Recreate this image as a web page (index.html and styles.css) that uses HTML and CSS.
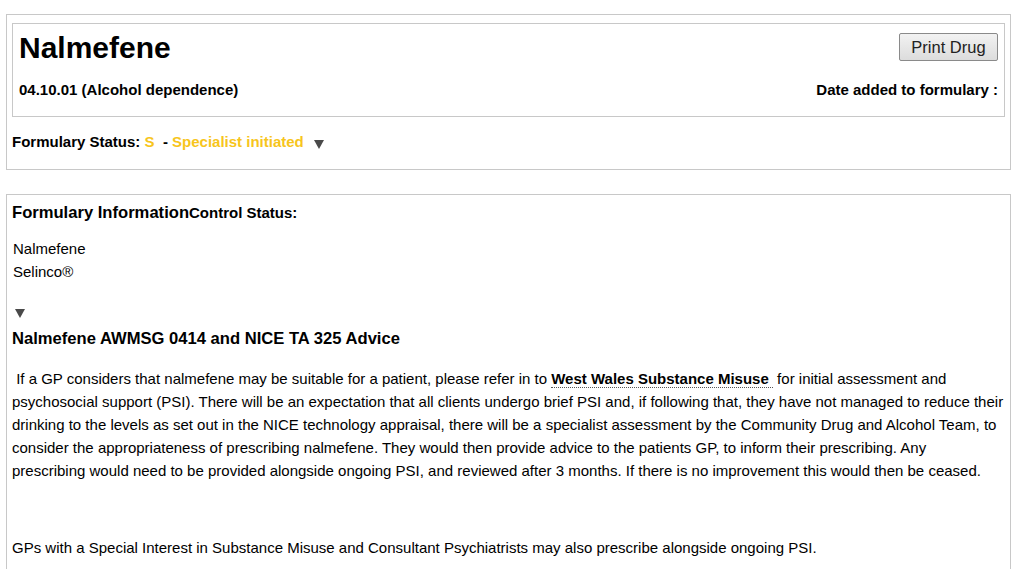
FILE: index.html
```
<!DOCTYPE html>
<html lang="en">
<head>
  <meta charset="UTF-8">
  <title>Nalmefene - Formulary</title>
  <link rel="stylesheet" href="styles.css">
</head>
<body>
  <!-- Drug header -->
  <div class="panel">
    <div class="drug-head">
      <div class="head-row">
        <h1>Nalmefene</h1>
        <button class="print-btn">Print Drug</button>
      </div>
      <div class="head-row sub">
        <span>04.10.01 (Alcohol dependence)</span>
        <span>Date added to formulary :</span>
      </div>
    </div>
    <div class="status">
      Formulary Status: <span class="gold">S</span>&nbsp; - <span class="gold">Specialist initiated</span>
      <span class="toggle"></span>
    </div>
  </div>

  <!-- Formulary information -->
  <div class="panel info">
    <h2>Formulary Information<span class="control">Control Status:</span></h2>
    <ul class="names">
      <li>Nalmefene</li>
      <li>Selinco®</li>
    </ul>
    <span class="toggle"></span>
    <h3>Nalmefene AWMSG 0414 and NICE TA 325 Advice</h3>
    <p>&nbsp;If a GP considers that nalmefene may be suitable for a patient, please refer in to <a href="#" class="ref">West Wales Substance Misuse&nbsp;</a> for initial assessment and psychosocial support (PSI). There will be an expectation that all clients undergo brief PSI and, if following that, they have not managed to reduce their drinking to the levels as set out in the NICE technology appraisal, there will be a specialist assessment by the Community Drug and Alcohol Team, to consider the appropriateness of prescribing nalmefene. They would then provide advice to the patients GP, to inform their prescribing. Any<br>prescribing would need to be provided alongside ongoing PSI, and reviewed after 3 months. If there is no improvement this would then be ceased.</p>
    <p class="blank">&nbsp;</p>
    <p>GPs with a Special Interest in Substance Misuse and Consultant Psychiatrists may also prescribe alongside ongoing PSI.</p>
  </div>
</body>
</html>
```

FILE: styles.css
```
body { margin: 0; padding: 14px 6px 0; font-family: "Liberation Sans", Arial, sans-serif; font-size: 15px; color: #000; background: #fff; }
.panel { border: 1px solid #c8c8c8; padding: 8px 5px 19px; margin-bottom: 24px; }
.drug-head { border: 1px solid #c8c8c8; padding: 7px 6px 18px; }
.head-row { display: flex; justify-content: space-between; align-items: flex-start; }
h1 { margin: 0; font-size: 30px; line-height: 34px; font-weight: bold; }
.print-btn { margin-top: 2px; height: 28px; width: 99px; padding: 0; font-family: "Liberation Sans", Arial, sans-serif; font-size: 16.5px; color: #222; border: 1px solid #8a8a8a; border-radius: 2px; background: linear-gradient(#f2f2f2, #dcdcdc); }
.sub { margin-top: 17px; font-weight: bold; line-height: 16px; }
.status { margin-top: 17px; font-weight: bold; line-height: 16px; }
.gold { color: #f7c51c; }
.toggle { display: inline-block; width: 0; height: 0; margin-left: 6px; border-left: 5.5px solid transparent; border-right: 5.5px solid transparent; border-top: 9px solid #4a4a4a; vertical-align: -2px; }
.info { padding: 8px 5px 60px; margin-bottom: 0; }
.info h2 { margin: 0; font-size: 16.6px; line-height: 19px; }
.control { font-size: 15px; }
.names { list-style: none; margin: 15px 0 0 1px; padding: 0; line-height: 23px; }
.info .toggle { display: block; margin: 26px 0 0 3px; }
.info h3 { margin: 11px 0 0; font-size: 16.6px; line-height: 20px; }
.info p { margin: 18px 1px 0 0; line-height: 23px; }
.info p + p { margin-top: 0; }
.info p.blank { margin: 15px 0 16px; }
.ref { color: #000; font-weight: bold; text-decoration: none; border-bottom: 1px dotted #555; }
```
